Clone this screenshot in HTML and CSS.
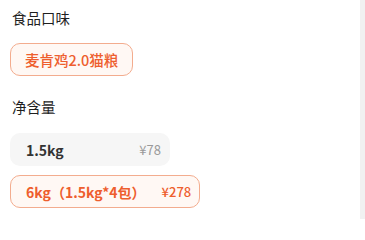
FILE: index.html
```html
<!DOCTYPE html>
<html lang="zh">
<head>
<meta charset="utf-8">
<link rel="stylesheet" href="styles.css">
</head>
<body>
<div class="page">
  <div class="content">
    <div class="title">食品口味</div>
    <div class="tags">
      <span class="tag">麦肯鸡2.0猫粮</span>
    </div>
    <div class="title title-2">净含量</div>
    <div class="options">
      <div class="option">
        <span class="opt-name">1.5kg</span>
        <span class="opt-price">¥78</span>
      </div>
      <div class="option selected">
        <span class="opt-name">6kg（1.5kg*4包）</span>
        <span class="opt-price">¥278</span>
      </div>
    </div>
  </div>
  <div class="scrollbar"></div>
</div>
</body>
</html>
```
FILE: styles.css
```css
html, body {
  margin: 0;
  padding: 0;
  background: #ffffff;
}
body {
  font-family: "Noto Sans CJK SC", "Noto Sans", sans-serif;
  color: #222222;
}
.page {
  display: flex;
  width: 365px;
  height: 219px;
  overflow: hidden;
}
.content {
  flex: 1;
  padding: 8px 0 0 10px;
}
.scrollbar {
  width: 5px;
  background: #f1f1f1;
}
.title {
  font-size: 14.5px;
  line-height: 20px;
  padding-left: 2px;
  color: #1f1f1f;
}
.title-2 {
  margin-top: 21px;
}
.tags {
  margin-top: 15px;
  display: flex;
}
.tag {
  display: inline-flex;
  align-items: center;
  height: 31px;
  padding: 0 14px 0 14px;
  border: 1px solid #f3ac8e;
  border-radius: 10px;
  background: #fff8f4;
  color: #ee5e2e;
  font-size: 14.5px;
  font-weight: 500;
}
.options {
  margin-top: 16px;
  display: flex;
  flex-direction: column;
  align-items: flex-start;
  gap: 9px;
}
.option {
  box-sizing: border-box;
  display: flex;
  align-items: center;
  justify-content: space-between;
  gap: 16px;
  min-width: 160px;
  height: 33px;
  padding: 0 8px 0 15px;
  border: 1px solid transparent;
  border-radius: 10px;
  background: #f6f6f6;
}
.opt-name {
  font-size: 14px;
  font-weight: 600;
  color: #333333;
}
.opt-price {
  font-size: 13px;
  color: #9a9a9a;
}
.option.selected {
  border-color: #f3ac8e;
  background: #fff8f4;
}
.option.selected .opt-name,
.option.selected .opt-price {
  color: #ee5e2e;
}
.option.selected .opt-price {
  font-weight: 500;
}
```
